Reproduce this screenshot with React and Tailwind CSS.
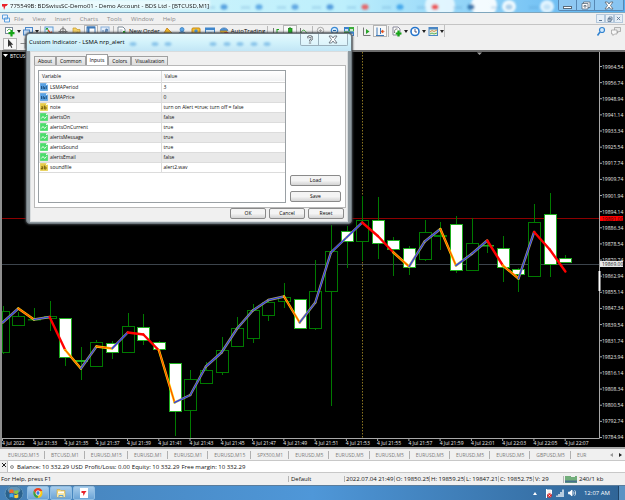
import { useState } from 'react';
import { clsx } from 'clsx';

const BAR_STEP = 15.63;
const barX = (i) => 2.7 + BAR_STEP * i;

// [body top, body bottom, high, low, bearish]
const CANDLES = [
  [311, 353, 306, 354, 0], [316, 326, 312, 326, 0], [319, 320, 308, 320, 0], [316, 319, 301, 331, 0],
  [318, 358, 318, 366, 1], [360, 362, 347, 380, 1], [342, 367, 340, 367, 0], [343, 353, 341, 359, 1],
  [326, 353, 313, 353, 0], [327, 341, 314, 345, 1], [342, 350, 341, 350, 1], [363, 412, 363, 436, 1],
  [379, 411, 370, 438, 0], [370, 384, 362, 384, 0], [350, 373, 337, 375, 0], [328, 347, 317, 347, 0],
  [310, 339, 304, 343, 0], [302, 316, 299, 321, 0], [297, 302, 283, 308, 0], [299, 329, 299, 329, 1],
  [291, 329, 260, 330, 0], [251, 292, 225, 406, 0], [231, 242, 226, 268, 1], [220, 242, 196, 261, 0],
  [220, 244, 197, 259, 1], [240, 250, 237, 276, 1], [248, 268, 246, 275, 1], [232, 260, 220, 261, 0],
  [235, 237, 222, 250, 0], [224, 271, 216, 273, 1], [243, 271, 218, 271, 0], [245, 246, 239, 253, 1],
  [248, 268, 236, 282, 1], [269, 275, 268, 292, 1], [222, 277, 204, 277, 0], [214, 265, 193, 277, 1],
  [258, 263, 255, 263, 1],
];

const LSMA = [
  322.5, 308.5, 319.5, 317, 350, 368.5, 346.5, 348.5, 332.5, 334.5, 350.5, 402.5, 395, 366.5, 352.5, 328.5, 310.5,
  300, 296.5, 322.5, 302.5, 252.5, 237.5, 222.5, 236, 252.5, 266.5, 241.5, 229, 265.5, 254, 240.5, 265.5, 278.5,
  232, 249.5, 271.5,
];
// one letter per segment: b = rising, o = turning, r = falling
const TREND = 'bobrobobrrobbbbbbbobbbbrrobbobbrobrr';

const PRICES = [
  '19964.54', '19956.74', '19948.94', '19941.14', '19933.34', '19925.54', '19917.74', '19909.74', '19901.94',
  '19894.14', '19886.34', '19878.54', '19870.74', '19862.94', '19855.14', '19847.34', '19839.54', '19831.74',
  '19823.94', '19816.14', '19808.34', '19800.54', '19792.74', '19784.94',
];

const TIMES = [
  '4 Jul 2022', '4 Jul 21:33', '4 Jul 21:35', '4 Jul 21:37', '4 Jul 21:39', '4 Jul 21:41', '4 Jul 21:43',
  '4 Jul 21:45', '4 Jul 21:47', '4 Jul 21:49', '4 Jul 21:51', '4 Jul 21:53', '4 Jul 21:55', '4 Jul 21:57',
  '4 Jul 21:59', '4 Jul 22:01', '4 Jul 22:03', '4 Jul 22:05', '4 Jul 22:07',
];

const PARAMS = [
  { name: 'LSMAPeriod', value: '3', type: 'int' },
  { name: 'LSMAPrice', value: '0', type: 'int' },
  { name: 'note', value: 'turn on Alert =true; turn off = false', type: 'str' },
  { name: 'alertsOn', value: 'false', type: 'bool' },
  { name: 'alertsOnCurrent', value: 'true', type: 'bool' },
  { name: 'alertsMessage', value: 'true', type: 'bool' },
  { name: 'alertsSound', value: 'true', type: 'bool' },
  { name: 'alertsEmail', value: 'false', type: 'bool' },
  { name: 'soundfile', value: 'alert2.wav', type: 'str' },
];

const CHART_TABS = [
  'EURUSD,M15', 'BTCUSD,M1', 'EURUSD,M15', 'EURUSD,M1', 'EURUSD,M1', 'EURUSD,M15', 'SPX500,M1', 'EURUSD,M5',
  'EURUSD,M5', 'EURUSD,M5', 'EURUSD,M5', 'EURUSD,M5', 'EURUSD,M5', 'GBPUSD,M5', 'EUR',
];

const GLASS_DOTS = [
  [224, '#3f8fd8'], [259, '#4a9be0'], [295, '#4b96dc'], [330, '#3b8ad6'], [365, '#f04848'], [400, '#2e9be8'],
  [435, '#ee3030'], [471, '#1f5f9c'], [509, '#9cc4e4'], [547, '#b8dcf4'],
];

/* ---------- icons ---------- */

function Svg({ children, className = 'w-[10px] h-[11px]' }) {
  return (
    <svg viewBox="0 0 10 11" preserveAspectRatio="none" className={className} fill="none" aria-hidden="true">
      {children}
    </svg>
  );
}

const ICONS = {
  newChart: (
    <>
      <rect x="0.5" y="1.5" width="7" height="6" fill="#fff" stroke="#7a8a9a" />
      <path d="M2 5l2-2 2 1" stroke="#3c9a3c" strokeWidth=".8" />
      <path d="M6.500 4v6.500M3.500 7.200h6" stroke="#16a516" strokeWidth="2.200" />
    </>
  ),
  profiles: (
    <>
      <rect x="2.500" y="1.500" width="7" height="5" fill="#dceafa" stroke="#4a86c8" />
      <rect x="0.500" y="4" width="6" height="5" fill="#c6dcf4" stroke="#4a86c8" />
      <path d="M3 10l5-1" stroke="#999" />
    </>
  ),
  market: (
    <>
      <rect x="1" y="1" width="8" height="9" fill="#e2f0fc" stroke="#5c9ad4" />
      <path d="M3 4v-2M3 2l-1 1.500M3 2l1 1.500" stroke="#1a9a1a" />
      <path d="M4 4l3 4M7.500 5.500v3h-2" stroke="#e04c20" strokeWidth="1.300" />
      <path d="M2 8l2-2" stroke="#18a018" strokeWidth="1.500" />
    </>
  ),
  crosshair: (
    <>
      <circle cx="5" cy="5.500" r="3" stroke="#777" />
      <path d="M5 .5v10M.5 5.500h9" stroke="#777" />
    </>
  ),
  cross: <path d="M5 .5v10M.5 5.500h9" stroke="#8a8a8a" />,
  folder: (
    <>
      <path d="M1 2h3l1 1.500h3v4H1z" fill="#f6d264" stroke="#c59a28" strokeWidth=".7" />
      <path d="M5 6l4.500 2-2 2.500L4 8z" fill="#f0c040" stroke="#b88a20" strokeWidth=".7" />
    </>
  ),
  panel: (
    <>
      <rect x="1" y="1" width="8" height="9" fill="#fff" stroke="#3c78b8" />
      <path d="M1 1.500h8M2.500 2v8" stroke="#3c78b8" strokeWidth="2" />
    </>
  ),
  tester: (
    <>
      <rect x="1" y="1" width="8" height="9" fill="#e4eefa" stroke="#8ab0da" />
      <path d="M3 8V4M5 8V6l2-3v5" stroke="#4a7ab0" />
      <circle cx="6.500" cy="4" r="1.200" stroke="#5580b0" strokeWidth=".7" />
    </>
  ),
  order: (
    <>
      <path d="M1 1h5l2 2v6H1z" fill="#fff" stroke="#7e8c98" />
      <path d="M2.500 4h3M2.500 6h2" stroke="#8ca0b4" strokeWidth=".8" />
      <path d="M7 5v5.500M4.300 7.800h5.500" stroke="#16a516" strokeWidth="2" />
    </>
  ),
  editor: (
    <>
      <path d="M1 7l3-5 5 5-3 3z" fill="#f4b824" stroke="#c07c10" strokeWidth=".8" />
      <path d="M1 8l4 2 4-3" stroke="#a86a10" />
    </>
  ),
  person: (
    <>
      <circle cx="5" cy="3.500" r="2" fill="#5aa4e4" stroke="#2d78c0" strokeWidth=".7" />
      <path d="M1.500 8.500c0-4 7-4 7 0z" fill="#6ab2ee" stroke="#2d78c0" strokeWidth=".7" />
      <path d="M1 10h8" stroke="#b0c8e0" />
    </>
  ),
  signal: (
    <>
      <rect x="1" y="2" width="8" height="7.500" rx="1" fill="#f6be30" stroke="#c88a10" />
      <circle cx="5" cy="5" r="1.700" fill="#4a94d8" />
      <path d="M3 8.500h4" stroke="#fff" />
    </>
  ),
  sheet: (
    <>
      <rect x=".5" y="2" width="9" height="7" fill="#d8ecfc" stroke="#3f86cc" />
      <path d="M1 3h8" stroke="#3f86cc" strokeWidth="2" />
      <path d="M3 7h4" stroke="#88b4de" />
    </>
  ),
  auto: (
    <>
      <path d="M1 4.500C2 1 8 1 9 4.500z" fill="#4a90d4" stroke="#2d68a8" strokeWidth=".6" />
      <path d="M1 5h7l-1 3.500H3z" fill="#f4c030" stroke="#b88418" strokeWidth=".6" />
      <rect x="5" y="6" width="4.500" height="4.500" rx="1" fill="#e02c20" />
      <rect x="6.500" y="7.500" width="1.500" height="1.500" fill="#fff" />
    </>
  ),
  bars: (
    <>
      <path d="M2.500 2v8M1 9.500h8" stroke="#777" />
      <path d="M6 3v6M6 3.500h2M4.500 7.500H6" stroke="#18a018" />
    </>
  ),
  candles: (
    <>
      <path d="M5 1v9" stroke="#168a16" />
      <rect x="3.500" y="2.500" width="3.500" height="5.500" fill="#22b422" stroke="#127a12" strokeWidth=".7" />
    </>
  ),
  line: (
    <>
      <path d="M1.500 2v8h8" stroke="#777" />
      <path d="M2 7c2-5 4-3 6.500 1.500" stroke="#3cae3c" />
    </>
  ),
  zoomIn: (
    <>
      <circle cx="4.500" cy="4.500" r="3.200" fill="#f2f2f2" stroke="#a8a8a8" />
      <path d="M7 7l2.500 3" stroke="#a8a8a8" strokeWidth="1.500" />
      <path d="M3 4.500h3M4.500 3v3" stroke="#a8a8a8" />
    </>
  ),
  zoomOut: (
    <>
      <circle cx="4.500" cy="4.500" r="3.200" fill="#d8ecfc" stroke="#3c8ad4" strokeWidth="1.200" />
      <path d="M7 7l2.500 3" stroke="#d89c28" strokeWidth="1.700" />
      <path d="M3 4.500h3" stroke="#2468a8" />
    </>
  ),
  tile: (
    <>
      <rect x="0" y="1" width="5" height="4.500" fill="#3a82cc" />
      <rect x="5" y="1" width="5" height="4.500" fill="#3cac3c" />
      <rect x="0" y="5.500" width="5" height="4.500" fill="#3cac3c" />
      <rect x="5" y="5.500" width="5" height="4.500" fill="#3a82cc" />
      <path d="M1 4h3M6 4h3M1 8.500h3M6 8.500h3" stroke="#fff" strokeWidth="1.300" />
    </>
  ),
  scroll: (
    <>
      <path d="M2.500 1.500v8h7" stroke="#777" />
      <path d="M5 3l3.500 2.500L5 8z" fill="#28a428" />
    </>
  ),
  shift: (
    <>
      <path d="M2 1.500v8M1 9.500h8M5.500 2v6" stroke="#3c78b8" />
      <path d="M9.500 5.500H6.500M8 4L6 5.500 8 7z" fill="#e05020" stroke="#e05020" strokeWidth=".7" />
    </>
  ),
  indicator: (
    <>
      <path d="M1 1h5l2 2v6H1z" fill="#fff" stroke="#889" />
      <path d="M2.500 7c0-4 1-4 3-4" stroke="#555" strokeWidth=".8" />
      <path d="M6.500 4.500v6M3.700 7.500h5.800" stroke="#16a516" strokeWidth="2.200" />
    </>
  ),
  clock: (
    <>
      <circle cx="5" cy="5.500" r="4" fill="#fff" stroke="#2474cc" strokeWidth="1.600" />
      <path d="M5 3v3h2" stroke="#446" strokeWidth=".9" />
    </>
  ),
  template: (
    <>
      <rect x="1" y="1.500" width="8.500" height="8" fill="#e6f2dc" stroke="#4a86c4" />
      <path d="M1 2.500h8" stroke="#4a86c4" strokeWidth="2" />
      <path d="M2 6l2-1.500 2 1L9 4" stroke="#d07030" strokeWidth=".8" />
      <path d="M2 8l2-1 2 1 3-1" stroke="#40a040" strokeWidth=".8" />
    </>
  ),
  search: (
    <>
      <circle cx="6" cy="4" r="2.500" fill="#d4eafc" stroke="#3484d0" strokeWidth="1.200" />
      <path d="M4 6L1.500 9.500" stroke="#3484d0" strokeWidth="1.600" />
    </>
  ),
  chat: (
    <>
      <path d="M3.500 1.500h6v4h-2l-1 1.500v-1.500h-3z" fill="#e8e8e8" stroke="#999" strokeWidth=".7" />
      <path d="M.5 4h5.500v4H3.500L2 9.500V8H.5z" fill="#f8f8f8" stroke="#999" strokeWidth=".7" />
    </>
  ),
  cursor: <path d="M3 1v8l2-1.800L6.300 10l1-.6L6 6.800h2.300z" fill="#333" />,
};

function ToolButton({ icon, label, text, pressed, drop }) {
  return (
    <button
      type="button"
      aria-label={text ? undefined : label}
      className={clsx('flex h-3 shrink-0 items-center', pressed && 'border border-[#b4b4b4] bg-[#f8f8f8]')}
    >
      <span className={clsx('flex justify-center', pressed ? 'w-3' : 'w-[14px]')}>
        <Svg>{ICONS[icon]}</Svg>
      </span>
      {text && <span className="pr-px text-[6px] text-black">{text}</span>}
      {drop && (
        <svg viewBox="0 0 4 3" className="h-[3px] w-1" aria-hidden="true">
          <path d="M0 0h4L2 3z" fill="#222" />
        </svg>
      )}
    </button>
  );
}

function Sep() {
  return <span className="mx-px h-[11px] w-px shrink-0 bg-[#b8b8b8]" />;
}

/* ---------- main window ---------- */

function TitleBar() {
  return (
    <div className="relative flex h-[13px] items-center justify-between border-b border-[#7fa6bd] bg-gradient-to-r from-[#d9f7fb] via-[#bdeffc] via-55% to-[#56b0f0]">
      <svg viewBox="0 0 625 13" preserveAspectRatio="none" className="absolute inset-0 h-full w-full" aria-hidden="true">
        <defs>
          <filter id="glass" x="-50%" y="-50%" width="200%" height="200%">
            <feGaussianBlur stdDeviation="1" />
          </filter>
        </defs>
        <g filter="url(#glass)">
          <path d="M0 0h210v10H0z" fill="#fff" opacity=".55" />
          <circle cx="440" cy="6" r="15" fill="#e9f8ff" opacity=".9" />
          <circle cx="484" cy="6" r="13" fill="#fff" opacity=".9" />
          <circle cx="509" cy="7" r="7" fill="#f0faff" />
          <circle cx="547" cy="7" r="7" fill="#e4f5ff" />
          {GLASS_DOTS.map(([x, fill]) => (
            <g key={x}>
              <ellipse cx={x} cy="7.500" rx="3.500" ry="3" fill={fill} opacity=".8" />
              <rect x={x - 18} y="7" width="9" height="2" fill="#4c90c4" opacity=".3" />
            </g>
          ))}
        </g>
      </svg>
      <div className="relative flex items-center">
        <svg viewBox="0 0 10 11" className="h-[11px] w-[10px]" aria-hidden="true">
          <path d="M2 3h6L6.500 5H5.500L4 9 3.500 5.500H2z" fill="#e8232b" />
        </svg>
        <h1 className="text-[6px] text-[#111]">775549B: BDSwissSC-Demo01 - Demo Account - BDS Ltd - [BTCUSD,M1]</h1>
      </div>
      <div className="relative mr-px flex h-[11px] self-start rounded-b-[2px] border border-t-0 border-[#5788b4] bg-[#9ccdf2]/70">
        <button type="button" aria-label="Minimize" className="flex w-[18px] items-center justify-center border-r border-[#5788b4]">
          <span className="mt-1 h-[3px] w-[9px] border border-[#5a6b7b] bg-white" />
        </button>
        <button type="button" aria-label="Restore" className="flex w-[18px] items-center justify-center border-r border-[#5788b4]">
          <svg viewBox="0 0 10 9" className="h-[9px] w-[10px]" fill="#fff" stroke="#5a6b7b" strokeWidth=".8" aria-hidden="true">
            <path d="M2.500 1h6.500v5.500H2.500z" />
            <path d="M1 2.500h6v5.500H1z" />
            <path d="M3 4.500h2v1.500H3z" />
          </svg>
        </button>
        <button type="button" aria-label="Close" className="flex w-[28px] items-center justify-center">
          <CloseGlyph />
        </button>
      </div>
    </div>
  );
}

function CloseGlyph() {
  return (
    <svg viewBox="0 0 10 9" className="h-[9px] w-[10px]" aria-hidden="true">
      <path d="M1 1h2.500L5 3 6.500 1H9L6.500 4.500 9 8H6.500L5 6 3.500 8H1l2.500-3.500z" fill="#fff" stroke="#5a6570" strokeWidth=".8" />
    </svg>
  );
}

function MenuBar() {
  return (
    <nav className="flex h-[11px] items-center justify-between bg-[#f0f0f0] pl-[2px] text-[6px] text-[#8b8b8b]">
      <div className="flex items-center gap-[9px]">
        <svg viewBox="0 0 8 9" className="-mr-[5px] h-[9px] w-2" fill="#eaf4ff" stroke="#5d9fdc" aria-hidden="true">
          <path d="M.5 1h5v4h-5zM2.500 4h5v4h-5z" />
        </svg>
        {['File', 'View', 'Insert', 'Charts', 'Tools', 'Window', 'Help'].map((item) => (
          <button key={item} type="button">{item}</button>
        ))}
      </div>
      <div className="mr-[2px] flex h-[9px]">
        <button type="button" aria-label="Minimize chart" className="flex w-[9px] items-end justify-center border border-[#b4c8dc] bg-[#e6eff8] pb-px">
          <span className="h-px w-[3px] bg-[#5b7490]" />
        </button>
        <button type="button" aria-label="Restore chart" className="flex w-[9px] items-center justify-center border border-[#b4c8dc] bg-[#e6eff8]">
          <svg viewBox="0 0 6 6" className="size-[6px]" fill="none" stroke="#5b7490" strokeWidth=".8" aria-hidden="true">
            <path d="M2 1h3v3H2zM1 2.500h3v3H1z" />
          </svg>
        </button>
        <button type="button" aria-label="Close chart" className="flex w-[9px] items-center justify-center border border-[#b4c8dc] bg-[#e6eff8]">
          <svg viewBox="0 0 6 6" className="size-[5px]" stroke="#5b7490" aria-hidden="true">
            <path d="M1 1l4 4M5 1L1 5" />
          </svg>
        </button>
      </div>
    </nav>
  );
}

function Toolbar() {
  return (
    <div className="flex h-[13px] items-center justify-between border-t border-[#c4c4c4] bg-[#f0f0f0] pr-[2px]">
      <div className="flex items-center border-r border-[#c0c0c0] pl-[3px]">
        <ToolButton icon="newChart" label="New chart" drop />
        <ToolButton icon="profiles" label="Profiles" drop />
        <Sep />
        <ToolButton icon="market" label="Market watch" />
        <ToolButton icon="crosshair" label="Data window" />
        <ToolButton icon="folder" label="Navigator" />
        <ToolButton icon="panel" label="Terminal" pressed />
        <ToolButton icon="tester" label="Strategy tester" />
        <Sep />
        <ToolButton icon="order" text="New Order" />
        <ToolButton icon="editor" label="Editor" />
        <ToolButton icon="person" label="Community" />
        <ToolButton icon="signal" label="Signals" />
        <ToolButton icon="sheet" label="Market" />
        <ToolButton icon="auto" text="AutoTrading" />
        <Sep />
        <ToolButton icon="bars" label="Bar chart" />
        <ToolButton icon="candles" label="Candlesticks" pressed />
        <ToolButton icon="line" label="Line chart" />
        <Sep />
        <ToolButton icon="zoomIn" label="Zoom in" />
        <ToolButton icon="zoomOut" label="Zoom out" />
        <ToolButton icon="tile" label="Tile windows" />
        <Sep />
        <ToolButton icon="scroll" label="Auto scroll" />
        <ToolButton icon="shift" label="Chart shift" pressed />
        <Sep />
        <ToolButton icon="indicator" label="Indicators" drop />
        <ToolButton icon="clock" label="Periods" drop />
        <ToolButton icon="template" label="Templates" drop />
      </div>
      <div className="flex gap-px">
        <ToolButton icon="search" label="Search" />
        <ToolButton icon="chat" label="Chat" />
      </div>
    </div>
  );
}

function LineStudies() {
  return (
    <div className="flex h-[13px] items-center gap-px bg-[#f0f0f0] pl-[3px]">
      <ToolButton icon="cursor" label="Cursor" pressed />
      <ToolButton icon="cross" label="Crosshair" />
    </div>
  );
}

/* ---------- chart ---------- */

function Segment({ i }) {
  const pos = { x1: barX(i), y1: LSMA[i], x2: barX(i + 1), y2: LSMA[i + 1], strokeLinecap: 'round' };
  const kind = TREND[i];
  if (kind === 'r') return <line {...pos} stroke="#ff0000" strokeWidth="2.400" />;
  return (
    <>
      <line {...pos} stroke={kind === 'o' ? '#ffd800' : '#a3a36a'} strokeWidth="2.400" />
      <line {...pos} stroke={kind === 'o' ? '#ff4a00' : '#2a35f0'} strokeWidth="1.100" />
    </>
  );
}

function Chart() {
  return (
    <svg viewBox="0 50 625 399" className="block w-full grow bg-black" role="img" aria-label="BTCUSD,M1">
      <path d="M0 51h625" stroke="#6c6c6c" strokeWidth="2" />
      <path d="M1 50v399" stroke="#8f8f8f" strokeWidth="2" />
      <path d="M0 448h625" stroke="#a9a9a9" strokeWidth="2" />
      <path d="M477 52.500h5l-2.500 2.500z" fill="#a0a0a0" />
      <path d="M3 54h5l-2.500 3z" fill="#fff" />
      <text x="10" y="58" fontSize="5" fill="#fff">BTCUSD,M1</text>

      <path d="M2 264.500h597" stroke="#3c444c" />
      <path d="M2 218.500h597" stroke="#8c0000" />
      <path d="M362.500 52v386" stroke="#8a7420" strokeDasharray="1.500 1.500" />

      {CANDLES.map(([top, bottom, high, low, bearish], i) => {
        const x = Math.round(barX(i));
        const left = Math.max(x - 6, 2);
        return (
          <g key={i} stroke={bearish ? '#1fae1f' : '#007a00'}>
            <path d={`M${x + 0.5} ${high}V${top}M${x + 0.5} ${bottom}V${low}`} stroke="#007a00" />
            <rect
              x={left + 0.5}
              y={top + 0.5}
              width={x + 6 - left}
              height={Math.max(bottom - top - 1, 0.5)}
              fill={bearish ? '#fff' : '#000'}
            />
          </g>
        );
      })}
      {LSMA.slice(1).map((_, i) => (
        <Segment key={i} i={i} />
      ))}

      <path d="M2 438.500h597.500V52" stroke="#a8a8a8" fill="none" />
      <path d="M599.500 271v20" stroke="#fff" strokeWidth="2" />
      <g fontSize="5" fill="#e8e8e8">
        {PRICES.map((price, i) => (
          <g key={price}>
            <path d={`M600 ${66.5 + i * 16.13}h2`} stroke="#a8a8a8" />
            <text x="602" y={68.5 + i * 16.13}>{price}</text>
          </g>
        ))}
        {TIMES.map((time, i) => (
          <g key={time}>
            <path d={`M${2.5 + i * 31.26} 438v3`} stroke="#a8a8a8" />
            <text x={2 + i * 31.26} y="445">{time}</text>
          </g>
        ))}
      </g>
      <rect x="600" y="216" width="23" height="5" fill="#ff0000" />
      <text x="602" y="220.500" fontSize="5" fill="#300">19891.00</text>
      <rect x="600" y="261" width="23" height="6" fill="#e8e8e8" />
      <text x="602" y="266" fontSize="5" fill="#222">19869.00</text>
    </svg>
  );
}

/* ---------- bottom bars ---------- */

function ChartTabs() {
  return (
    <div className="flex h-[11px] items-center justify-between overflow-hidden bg-[#f0f0f0] pl-[2px] text-[5px] text-[#7c7c7c]">
      <div className="flex items-center overflow-hidden">
        {CHART_TABS.map((tab, i) => (
          <button
            key={i}
            type="button"
            className={clsx('h-2 shrink-0 pr-[5px] pl-[6px] leading-[8px]', i < CHART_TABS.length - 1 && 'border-r border-[#b0b0b0]')}
          >
            {tab}
          </button>
        ))}
      </div>
      <div className="flex shrink-0 gap-[6px] pr-[3px]">
        <button type="button" aria-label="Previous tabs">
          <svg viewBox="0 0 3 4" className="h-1 w-[3px]"><path d="M3 0v4L0 2z" fill="#999" /></svg>
        </button>
        <button type="button" aria-label="Next tabs">
          <svg viewBox="0 0 3 4" className="h-1 w-[3px]"><path d="M0 0v4l3-2z" fill="#222" /></svg>
        </button>
      </div>
    </div>
  );
}

function Terminal() {
  return (
    <div className="flex h-[13px] border-y border-[#c8c8c8] bg-[#f0f0f0]">
      <button type="button" aria-label="Close terminal" className="flex w-[7px] justify-center pt-[2px]">
        <svg viewBox="0 0 4 4" className="size-1" stroke="#222"><path d="M0 0l4 4M4 0L0 4" /></svg>
      </button>
      <div className="flex grow items-center gap-[3px] border-l border-[#c0c0c0] bg-white pl-[2px] text-[6px] text-[#111]">
        <span className="size-1 rounded-full border border-[#999] bg-[#ddd]" />
        <p className="flex gap-[2px] whitespace-nowrap">
          <span>Balance: 10 332.29 USD</span>
          <span>Profit/Loss: 0.00</span>
          <span>Equity: 10 332.29</span>
          <span>Free margin: 10 332.29</span>
        </p>
      </div>
    </div>
  );
}

function StatusBar() {
  return (
    <div className="flex h-3 items-center bg-[#f0f0f0] text-[6px] whitespace-nowrap text-[#111]">
      <span className="grow pl-px">For Help, press F1</span>
      <span className="w-[56px] border-l border-[#b4b4b4] pl-[2px]">Default</span>
      <span className="w-[50px] border-l border-[#b4b4b4] pl-px">2022.07.04 21:49</span>
      <span className="w-[35px] border-l border-[#b4b4b4] pl-px">O: 19850.25</span>
      <span className="w-[35px] border-l border-[#b4b4b4] pl-px">H: 19859.25</span>
      <span className="w-[34px] border-l border-[#b4b4b4] pl-px">L: 19847.21</span>
      <span className="w-[35px] border-l border-[#b4b4b4] pl-px">C: 19852.75</span>
      <span className="w-[30px] border-l border-[#b4b4b4] pl-px">V: 29</span>
      <span className="flex w-[62px] items-center gap-[2px] border-l border-[#b4b4b4] pl-px">
        <svg viewBox="0 0 12 7" className="h-[7px] w-3" aria-hidden="true">
          <path d="M1 0v7M3 0v7M5 0v7M7 1v6M9 1v6M11 0v7" stroke="#2f8a3c" strokeWidth="1.300" />
          <path d="M0 5.500h12" stroke="#2a4a9c" strokeWidth="2" opacity=".6" />
        </svg>
        240/1 kb
      </span>
    </div>
  );
}

function TaskButton({ label, children }) {
  return (
    <button
      type="button"
      aria-label={label}
      className="flex h-[14px] w-[22px] items-center justify-center rounded-[2px] border border-[#8fbde2] bg-gradient-to-b from-[#a8cdec] to-[#6ba4d6]"
    >
      {children}
    </button>
  );
}

function TaskBar() {
  return (
    <footer className="flex h-[15px] items-center justify-between overflow-hidden border-t border-[#5b7d9c] bg-gradient-to-r from-[#4581b8] via-[#4f97d8] to-[#2f6496]">
      <div className="flex items-center gap-px">
        <button type="button" aria-label="Start" className="mr-[2px] ml-1">
          <svg viewBox="0 0 20 15" className="h-[15px] w-5" aria-hidden="true">
            <ellipse cx="10" cy="7.500" rx="9" ry="8" fill="#2b628c" stroke="#5f93b8" />
            <ellipse cx="10" cy="4" rx="6.500" ry="3.500" fill="#87b5d4" opacity=".6" />
            <path d="M5.500 4c1.500-1 2.500-.8 4 0v3.300c-1.500-.8-2.500-.8-4 0z" fill="#f06a28" />
            <path d="M10.300 4.200c1.500.8 2.500.6 4-.3v3.300c-1.500.9-2.500 1-4 .3z" fill="#8cc83c" />
            <path d="M5.500 8.200c1.500-1 2.500-.8 4 0v3.300c-1.500-.8-2.500-.8-4 0z" fill="#42a4ec" />
            <path d="M10.300 8.400c1.500.8 2.500.6 4-.3v3.300c-1.500.9-2.500 1-4 .3z" fill="#fcd030" />
          </svg>
        </button>
        <TaskButton label="Chrome">
          <svg viewBox="0 0 10 12" preserveAspectRatio="none" className="h-3 w-[10px]" aria-hidden="true">
            <ellipse cx="5" cy="6" rx="4.500" ry="5" fill="#fbc816" />
            <path d="M.8 3.800C2.500 0 7.800 0 9.300 4H5L3.300 7.500z" fill="#e53b2e" />
            <path d="M.8 3.800l2.500 4L5.500 8.500 4.500 11C.8 10.500-.4 6.500.8 3.800z" fill="#36a04c" />
            <ellipse cx="5" cy="6" rx="2" ry="2.300" fill="#3a7ce8" stroke="#fff" strokeWidth=".8" />
          </svg>
        </TaskButton>
        <TaskButton label="Explorer">
          <svg viewBox="0 0 10 10" className="size-[10px]" aria-hidden="true">
            <path d="M1 1.500h3l1 1h4V9H1z" fill="#f4d878" stroke="#d0a848" strokeWidth=".6" />
            <path d="M2 3.500h6v2H2z" fill="#fff" />
            <path d="M1 5.500h8V9H1z" fill="#f8e49c" />
            <path d="M3 9V7.500h4V9" stroke="#5aa0dc" fill="none" />
          </svg>
        </TaskButton>
        <TaskButton label="MetaTrader">
          <svg viewBox="0 0 8 10" className="h-[10px] w-2" aria-hidden="true">
            <path d="M0 0h8v10H0z" fill="#fff" />
            <path d="M1.500 3h5L5 5 3.500 8 3 5H1.500z" fill="#e8232b" />
          </svg>
        </TaskButton>
      </div>
      <div className="flex h-full items-center gap-1 text-white">
        <svg viewBox="0 0 4 3" className="mr-1 h-[3px] w-1" aria-hidden="true"><path d="M2 0l2 3H0z" fill="#fff" /></svg>
        <svg viewBox="0 0 7 9" className="h-[9px] w-[7px]" aria-hidden="true">
          <path d="M1.500 0v9M2 1h4.500v4H2z" stroke="#fff" fill="#eee" />
          <circle cx="4.500" cy="6.500" r="2.300" fill="#e02828" />
          <path d="M3.500 5.500l2 2m0-2l-2 2" stroke="#fff" strokeWidth=".7" />
        </svg>
        <svg viewBox="0 0 8 8" className="size-2" aria-hidden="true">
          <path d="M1 8V6.500M3 8V5M5 8V3M7 8V.5" stroke="#fff" strokeWidth="1.300" />
        </svg>
        <svg viewBox="0 0 8 8" className="size-2" fill="none" stroke="#fff" strokeWidth=".8" aria-hidden="true">
          <path d="M.5 3h1.300L4 1v6L1.800 5H.5z" fill="#fff" />
          <path d="M5.300 2.500c.8 1 .8 2 0 3M6.700 1.300c1.300 1.800 1.300 3.600 0 5.400" />
        </svg>
        <time className="px-1 text-[6px]">12:07 AM</time>
        <span className="h-full w-[7px] border-l border-[#1d4368] bg-[#5b93c4]" />
      </div>
    </footer>
  );
}

/* ---------- dialog ---------- */

function ParamIcon({ type }) {
  const fill = { int: '#5aa2e2', str: '#e6cc4a', bool: '#4cdc6c' }[type];
  return (
    <svg viewBox="0 0 8 8" className="size-2 shrink-0" aria-hidden="true">
      <path d="M.4.4h5.500L7.600 2v5.600H.4z" fill={fill} stroke={fill} strokeWidth=".8" />
      <path d="M6 .4V2h1.600" fill="#fff" />
      {type === 'bool' && <path d="M1.300 5.500L3 3.500l1.700 2L6.500 3.500" fill="none" stroke="#fff" strokeWidth=".9" />}
      {type === 'int' && <path d="M1.500 3v3M3.200 6V3.500l1.300 1V6M6.200 3v3" fill="none" stroke="#12406c" strokeWidth=".8" />}
      {type === 'str' && <path d="M1.300 3.700h1.400V6H1.300V5h1.400M4.400 2.500V6H6V4H4.400" fill="none" stroke="#5c4800" strokeWidth=".7" />}
    </svg>
  );
}

function DialogButton({ className, children }) {
  return (
    <button
      type="button"
      className={clsx(
        'h-[11px] rounded-[2px] border border-[#8a8a8a] bg-gradient-to-b from-[#f4f4f4] from-50% to-[#d4d4d4] text-center text-[5px] leading-[9px] text-black',
        className
      )}
    >
      {children}
    </button>
  );
}

function IndicatorDialog() {
  const [tab, setTab] = useState('Inputs');

  return (
    <section
      role="dialog"
      aria-labelledby="dialog-title"
      className="absolute top-[33px] left-[26px] w-[326px] rounded-[4px] border border-[#6f797f] bg-[#8f999f] px-[3px] pb-px shadow-[0_0_2px_1px_rgba(60,64,68,0.9)]"
    >
      <div className="relative -mx-[3px] flex h-[17px] items-start justify-between overflow-hidden rounded-t-[3px] bg-gradient-to-b from-[#e4f8fc] via-[#d2f2fb] to-[#c2e6f6] pl-[2px]">
        <svg viewBox="0 0 324 17" preserveAspectRatio="none" className="absolute inset-0 h-full w-full" aria-hidden="true">
          <g filter="url(#glass)" fill="#6fb4e4" opacity=".7">
            {[106, 128, 141, 186, 200, 213, 227, 240].map((x) => (
              <ellipse key={x} cx={x} cy="10" rx="3.500" ry="2" />
            ))}
          </g>
        </svg>
        <h2 id="dialog-title" className="relative pt-1 text-[6px] leading-[9px] text-black">Custom Indicator - LSMA nrp_alert</h2>
        <div className="relative mr-[3px] flex h-3 rounded-b-[2px] border border-t-0 border-[#9ab0bc] bg-white/30">
          <button type="button" aria-label="Help" className="flex w-[18px] items-center justify-center border-r border-[#9ab0bc]">
            <svg viewBox="0 0 8 10" className="h-[10px] w-2" fill="none" aria-hidden="true">
              <path d="M2 3.200C2 .8 6 .8 6 3.200 6 4.800 4 4.600 4 6.500M4 7.600v1.200" stroke="#56616a" strokeWidth="2.200" />
              <path d="M2 3.200C2 .8 6 .8 6 3.200 6 4.800 4 4.600 4 6.500M4 7.600v1.200" stroke="#fff" />
            </svg>
          </button>
          <button type="button" aria-label="Close" className="flex w-[28px] items-center justify-center">
            <CloseGlyph />
          </button>
        </div>
      </div>

      <div className="border border-[#d8dcde] bg-[#f0f0f0] pt-[2px] pr-px pb-[2px] pl-[3px]">
        <div role="tablist" className="flex items-end text-[5px] leading-[8px] text-black">
          {['About', 'Common', 'Inputs', 'Colors', 'Visualization'].map((name) => (
            <button
              key={name}
              type="button"
              role="tab"
              aria-selected={tab === name}
              onClick={() => setTab(name)}
              className={clsx(
                'border border-b-0 border-[#a0a0a0] px-[3px]',
                tab === name ? 'h-[11px] bg-white' : 'h-[9px] bg-gradient-to-b from-[#f2f2f2] to-[#dcdcdc]'
              )}
            >
              {name}
            </button>
          ))}
        </div>

        <div className="flex h-[143px] items-stretch gap-1 border border-[#b8b8b8] bg-white py-1 pr-1 pl-[3px]">
          <div className="min-w-0 grow border border-[#9aa0a4]">
            <table className="w-full table-fixed border-collapse text-left text-[5px] leading-[8px] text-[#111]">
              <thead>
                <tr className="h-[11px] border-b border-[#d4d4d4] bg-gradient-to-b from-white to-[#f2f3f4]">
                  <th className="w-[122px] border-r border-[#dcdcdc] p-0 pl-[3px] font-normal">Variable</th>
                  <th className="p-0 pl-[3px] font-normal">Value</th>
                </tr>
              </thead>
              <tbody>
                {PARAMS.map(({ name, value, type }) => (
                  <tr key={name} className="h-[10px] border-b border-[#dcdcdc] even:bg-[#e9e9e9]">
                    <td className="border-r border-[#dcdcdc] p-0">
                      <span className="flex items-center gap-[2px] pl-px">
                        <ParamIcon type={type} />
                        {name}
                      </span>
                    </td>
                    <td className="p-0 pl-[2px]">{value}</td>
                  </tr>
                ))}
              </tbody>
            </table>
          </div>
          <div className="flex w-[51px] shrink-0 flex-col justify-end gap-[5px] pb-px">
            <DialogButton>Load</DialogButton>
            <DialogButton>Save</DialogButton>
          </div>
        </div>

        <div className="flex justify-end gap-[3px] pr-[2px]">
          <DialogButton className="w-[36px]">OK</DialogButton>
          <DialogButton className="w-[36px]">Cancel</DialogButton>
          <DialogButton className="w-[36px]">Reset</DialogButton>
        </div>
      </div>
    </section>
  );
}

export default function App() {
  return (
    <main className="relative flex min-h-screen flex-col overflow-hidden bg-[#f0f0f0] font-['Open_Sans',sans-serif] leading-none">
      <TitleBar />
      <MenuBar />
      <Toolbar />
      <LineStudies />
      <Chart />
      <ChartTabs />
      <Terminal />
      <StatusBar />
      <TaskBar />
      <IndicatorDialog />
    </main>
  );
}
